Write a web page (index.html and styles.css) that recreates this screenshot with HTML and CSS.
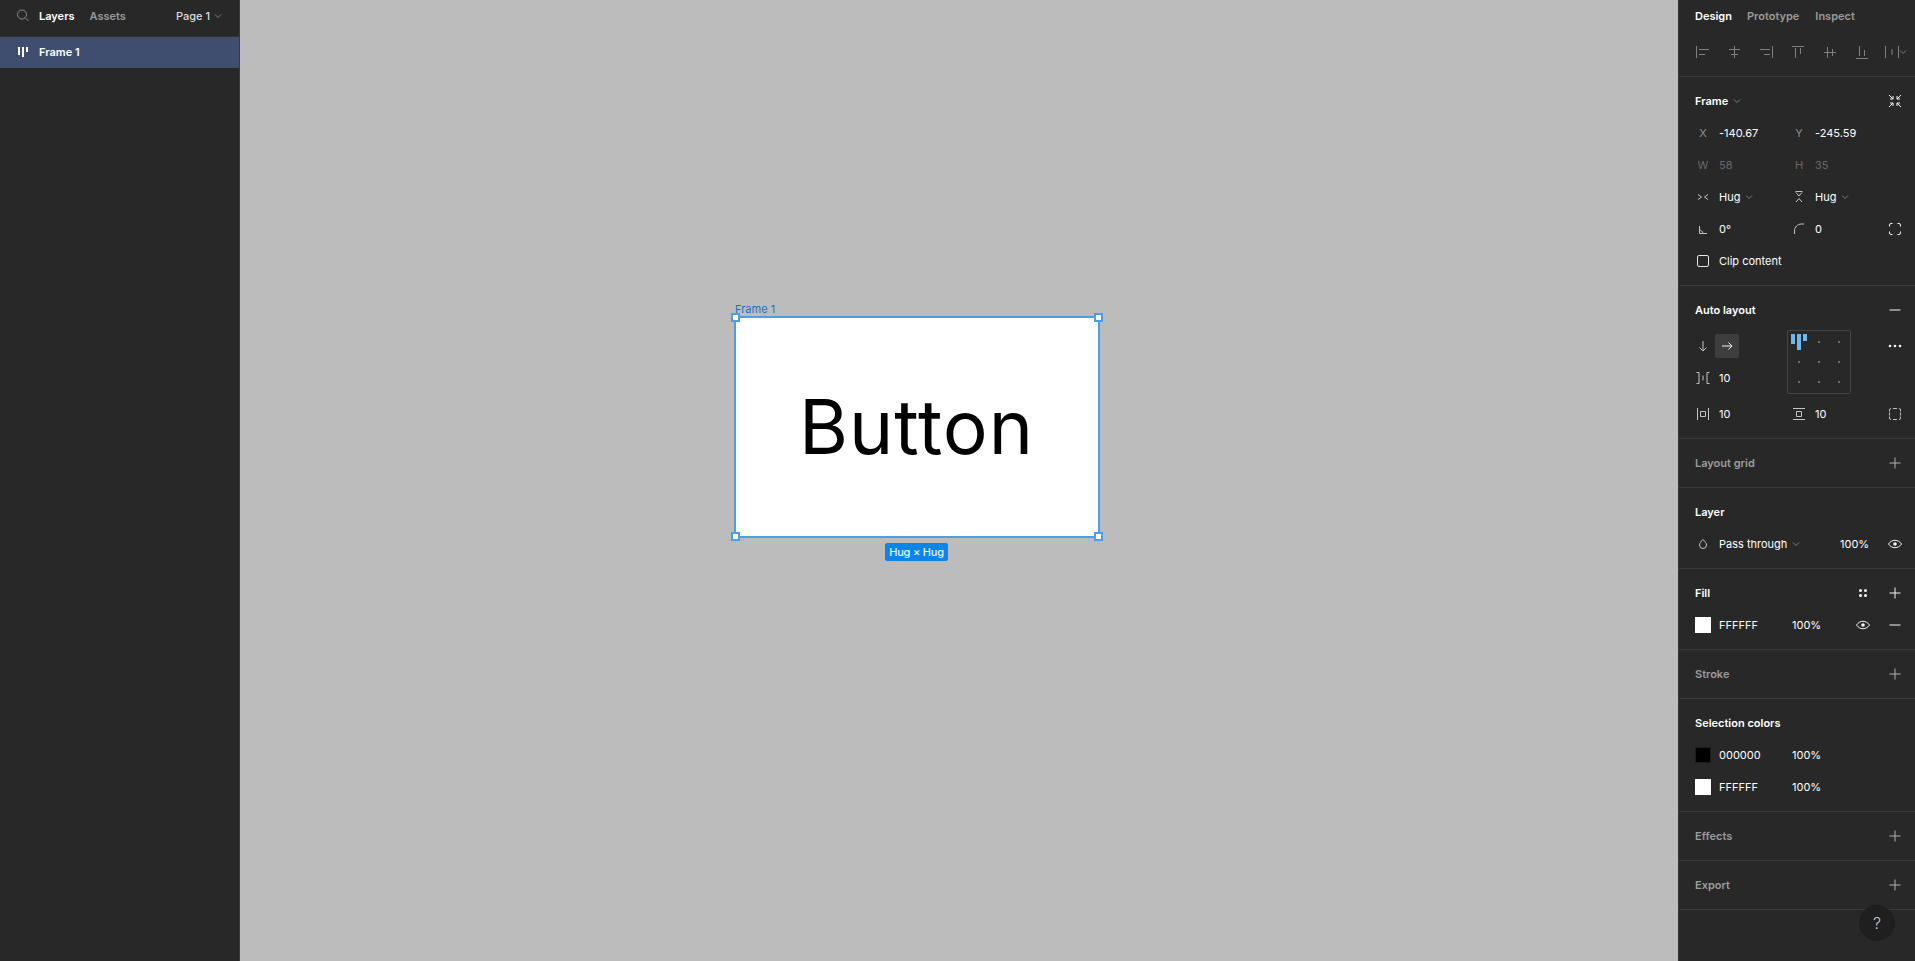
FILE: index.html
```html
<!DOCTYPE html>
<html lang="en">
<head>
<meta charset="utf-8">
<title>Frame 1</title>
<link rel="stylesheet" href="styles.css">
</head>
<body>
<svg class="defs" xmlns="http://www.w3.org/2000/svg">
  <symbol id="plus" viewBox="0 0 24 24"><path d="M12 6.500v11M6.500 12h11"/></symbol>
  <symbol id="minus" viewBox="0 0 24 24"><path d="M6.500 12h11"/></symbol>
  <symbol id="chev" viewBox="0 0 8 8"><path d="M1 2.500l3 3 3-3"/></symbol>
  <symbol id="eye" viewBox="0 0 24 24"><path d="M5.500 12c1.700-2.500 3.900-3.700 6.500-3.700s4.800 1.200 6.500 3.700c-1.700 2.500-3.900 3.700-6.500 3.700s-4.800-1.200-6.500-3.700z"/><circle class="solid" cx="12" cy="12" r="1.800"/></symbol>
</svg>

<div class="app">
  <aside class="left">
    <header class="left-head">
      <svg class="ic search" viewBox="0 0 24 24"><circle cx="11" cy="10.500" r="4.500"/><path d="M14.500 14l3 3"/></svg>
      <span class="tab on">Layers</span>
      <span class="tab">Assets</span>
      <span class="page">Page 1<svg class="chev" viewBox="0 0 8 8"><use href="#chev"/></svg></span>
    </header>
    <div class="layer-row">
      <svg class="ic layer-ic" viewBox="0 0 24 24"><path d="M7 7h2v8H7zM11 7h2v10h-2zM15 7h2v5h-2z"/></svg>
      <span>Frame 1</span>
    </div>
  </aside>

  <main class="canvas">
    <div class="frame-label">Frame 1</div>
    <div class="frame">
      <span class="frame-text">Button</span>
      <i class="handle tl"></i><i class="handle tr"></i><i class="handle bl"></i><i class="handle br"></i>
      <span class="size-badge">Hug × Hug</span>
    </div>
  </main>

  <aside class="right">
    <section class="sec sec-top">
      <nav class="right-tabs">
        <span class="tab on">Design</span>
        <span class="tab">Prototype</span>
        <span class="tab inspect">Inspect</span>
      </nav>
      <div class="align-row">
        <svg class="ic gray" viewBox="0 0 24 24"><path d="M6.500 6v12M9 9.500h10M9 14.500h6"/></svg>
        <svg class="ic gray" viewBox="0 0 24 24"><path d="M12.500 6v12M7 9.500h11M9 14.500h7"/></svg>
        <svg class="ic gray" viewBox="0 0 24 24"><path d="M18.500 6v12M6 9.500h10M10 14.500h6"/></svg>
        <svg class="ic gray" viewBox="0 0 24 24"><path d="M6 6.500h12M9.500 8v10M14.500 8v6"/></svg>
        <svg class="ic gray" viewBox="0 0 24 24"><path d="M6 12.500h12M9.500 7v11M14.500 9v7"/></svg>
        <svg class="ic gray" viewBox="0 0 24 24"><path d="M6 18.500h12M9.500 6v10M14.500 10v6"/></svg>
        <span class="distribute">
          <svg class="ic gray" viewBox="0 0 24 24"><path d="M5.500 6v12M18.500 6v12M12 9v6"/></svg>
          <svg class="chev" viewBox="0 0 8 8"><use href="#chev"/></svg>
        </span>
      </div>
    </section>

    <section class="sec">
      <div class="title-row">
        <span class="title">Frame<svg class="chev" viewBox="0 0 8 8"><use href="#chev"/></svg></span>
        <svg class="ic white" viewBox="0 0 24 24"><path d="M6 6l4 4M7 10h3V7M18 6l-4 4M17 10h-3V7M6 18l4-4M7 14h3v3M18 18l-4-4M17 14h-3v3"/></svg>
      </div>
      <div class="prop-grid">
        <div class="cell"><span class="lbl">X</span><span class="val">-140.67</span></div>
        <div class="cell"><span class="lbl">Y</span><span class="val">-245.59</span></div>
        <span></span>
        <div class="cell dis"><span class="lbl">W</span><span class="val">58</span></div>
        <div class="cell dis"><span class="lbl">H</span><span class="val">35</span></div>
        <span></span>
        <div class="cell">
          <svg class="ic light" viewBox="0 0 24 24"><path d="M7 9.500l3.500 2.500L7 14.500M17 9.500L13.500 12l3.500 2.500"/></svg>
          <span class="val">Hug</span><svg class="chev" viewBox="0 0 8 8"><use href="#chev"/></svg>
        </div>
        <div class="cell">
          <svg class="ic light" viewBox="0 0 24 24"><path d="M8.500 6.500h7M9 7.500l3 3.500 3-3.500M9 17l3-3.500 3 3.500"/></svg>
          <span class="val">Hug</span><svg class="chev" viewBox="0 0 8 8"><use href="#chev"/></svg>
        </div>
        <span></span>
        <div class="cell">
          <svg class="ic light" viewBox="0 0 24 24"><path d="M8.500 9v7.500H16M8.500 13c1.600 0 3 1.300 3.500 3.500"/></svg>
          <span class="val">0°</span>
        </div>
        <div class="cell">
          <svg class="ic light" viewBox="0 0 24 24"><path d="M7.500 17v-3c0-4 3-7 7-7H17"/></svg>
          <span class="val">0</span>
        </div>
        <svg class="ic white" viewBox="0 0 24 24"><path d="M6.500 9.500V8a1.500 1.500 0 0 1 1.500-1.500h1.500M14.500 6.500H16A1.500 1.500 0 0 1 17.500 8v1.500M17.500 14.500V16a1.500 1.500 0 0 1-1.500 1.500h-1.500M9.500 17.500H8A1.500 1.500 0 0 1 6.500 16v-1.500"/></svg>
      </div>
      <div class="clip-row">
        <i class="checkbox"></i><span class="val">Clip content</span>
      </div>
    </section>

    <section class="sec">
      <div class="title-row">
        <span class="title">Auto layout</span>
        <svg class="ic white"><use href="#minus"/></svg>
      </div>
      <div class="auto-grid">
        <div class="cell dir">
          <svg class="ic light" viewBox="0 0 24 24"><path d="M12 7v10M8.500 13.500L12 17l3.500-3.500"/></svg>
          <span class="dir-on"><svg class="ic white" viewBox="0 0 24 24"><path d="M7 12h10M13.500 8.500L17 12l-3.500 3.500"/></svg></span>
        </div>
        <div class="align-box">
          <i class="bars"><b class="b1"></b><b class="b2"></b><b class="b3"></b></i>
          <i class="dot first"></i><i class="dot"></i><i class="dot"></i><i class="dot"></i><i class="dot"></i><i class="dot"></i><i class="dot"></i><i class="dot"></i>
        </div>
        <svg class="ic white" viewBox="0 0 24 24"><circle class="solid" cx="7" cy="12" r="1.300"/><circle class="solid" cx="12" cy="12" r="1.300"/><circle class="solid" cx="17" cy="12" r="1.300"/></svg>
        <div class="cell gap-row">
          <svg class="ic light" viewBox="0 0 24 24"><path d="M5.500 6.500h2.500v11H5.500M18.500 6.500H16v11h2.500M12 9.500v5"/></svg>
          <span class="val">10</span>
        </div>
        <div class="cell pad-row">
          <svg class="ic light" viewBox="0 0 24 24"><path d="M6.500 6v12M17.500 6v12M9.500 9.500h5v5h-5z"/></svg>
          <span class="val">10</span>
        </div>
        <div class="cell pad-row">
          <svg class="ic light" viewBox="0 0 24 24"><path d="M6 6.500h12M6 17.500h12M9.500 9.500h5v5h-5z"/></svg>
          <span class="val">10</span>
        </div>
        <div class="cell pad-row">
          <svg class="ic light" viewBox="0 0 24 24"><path d="M6.500 9.500V8A1.500 1.500 0 0 1 8 6.500M6.500 10.500v3M10 6.500h4M17.500 10.500v3M10 17.500h4M16 6.500A1.500 1.500 0 0 1 17.500 8v1.500M17.500 14.500V16a1.500 1.500 0 0 1-1.500 1.500M8 17.500A1.500 1.500 0 0 1 6.500 16v-1.500"/></svg>
        </div>
      </div>
    </section>

    <section class="sec">
      <div class="title-row dim">
        <span class="title">Layout grid</span>
        <svg class="ic"><use href="#plus"/></svg>
      </div>
    </section>

    <section class="sec">
      <div class="title-row"><span class="title">Layer</span></div>
      <div class="row layer-props">
        <div class="cell">
          <svg class="ic light" viewBox="0 0 24 24"><path d="M12 7.500c2.200 2.200 3.500 3.900 3.500 5.500a3.500 3.500 0 0 1-7 0c0-1.600 1.300-3.300 3.500-5.500z"/></svg>
          <span class="val">Pass through</span><svg class="chev" viewBox="0 0 8 8"><use href="#chev"/></svg>
        </div>
        <span class="val pct-end">100%</span>
        <svg class="ic white"><use href="#eye"/></svg>
      </div>
    </section>

    <section class="sec">
      <div class="title-row">
        <span class="title">Fill</span>
        <div class="title-acts">
          <svg class="ic white" viewBox="0 0 24 24"><circle class="solid" cx="9.500" cy="9.500" r="1.500"/><circle class="solid" cx="14.500" cy="9.500" r="1.500"/><circle class="solid" cx="9.500" cy="14.500" r="1.500"/><circle class="solid" cx="14.500" cy="14.500" r="1.500"/></svg>
          <svg class="ic white"><use href="#plus"/></svg>
        </div>
      </div>
      <div class="row color-row">
        <i class="swatch s-white"></i><span class="val hex">FFFFFF</span><span class="val pct">100%</span>
        <div class="title-acts push">
          <svg class="ic white"><use href="#eye"/></svg>
          <svg class="ic white"><use href="#minus"/></svg>
        </div>
      </div>
    </section>

    <section class="sec">
      <div class="title-row dim">
        <span class="title">Stroke</span>
        <svg class="ic"><use href="#plus"/></svg>
      </div>
    </section>

    <section class="sec">
      <div class="title-row"><span class="title">Selection colors</span></div>
      <div class="row color-row">
        <i class="swatch s-black"></i><span class="val hex">000000</span><span class="val pct">100%</span>
      </div>
      <div class="row color-row">
        <i class="swatch s-white"></i><span class="val hex">FFFFFF</span><span class="val pct">100%</span>
      </div>
    </section>

    <section class="sec">
      <div class="title-row dim">
        <span class="title">Effects</span>
        <svg class="ic"><use href="#plus"/></svg>
      </div>
    </section>

    <section class="sec">
      <div class="title-row dim">
        <span class="title">Export</span>
        <svg class="ic"><use href="#plus"/></svg>
      </div>
    </section>

    <button class="help">?</button>
  </aside>
</div>
</body>
</html>
```

FILE: styles.css
```css
* { box-sizing: border-box; }
html, body { margin: 0; height: 100%; overflow: hidden; }
body {
  font-family: Inter, "Liberation Sans", sans-serif;
  font-size: 11px;
  color: #fff;
  background: #bcbcbc;
}
.defs { display: none; }
.app { display: flex; height: 961px; }

.ic { width: 24px; height: 24px; flex: none; fill: none; stroke: currentColor; stroke-width: 1; }
.solid { fill: currentColor; stroke: none; }
.white { color: #f5f5f5; }
.light { color: #c4c4c4; }
.gray { color: #808080; }
.chev { width: 8px; height: 8px; flex: none; fill: none; stroke: #7d7d7d; stroke-width: 1; }

/* Left panel */
.left { width: 240px; flex: none; background: #282828; border-right: 1px solid #3a3a3a; }
.left-head { display: flex; align-items: center; height: 37px; padding-left: 11px; padding-bottom: 5px; border-bottom: 1px solid #333; }
.search { color: #8a8a8a; }
.tab { font-weight: 600; color: #9a9a9a; }
.tab.on { color: #fff; }
.left-head .tab.on { margin-left: 4px; }
.left-head .tab:not(.on) { margin-left: 15px; }
.page { margin-left: auto; margin-right: 17px; display: flex; align-items: center; gap: 4px; font-weight: 500; color: #dcdcdc; }
.layer-row { display: flex; align-items: center; height: 31px; padding-left: 11px; padding-bottom: 1px; gap: 4px; background: #3f4e6f; color: #fff; font-weight: 600; }
.layer-ic { fill: #fff; stroke: none; }

/* Canvas */
.canvas { flex: 1; position: relative; background: #bcbcbc; }
.frame-label { position: absolute; left: 495px; top: 302px; color: #1d6fc2; font-size: 11px; line-height: 14px; }
.frame { position: absolute; left: 494px; top: 316px; width: 366px; height: 222px; padding-bottom: 1px; background: #fff; border: 2px solid #4a9fe8; display: flex; align-items: center; justify-content: center; }
.frame-text { color: #000; font-size: 75px; line-height: 1; letter-spacing: 1px; margin-left: -1px; }
.handle { position: absolute; width: 9px; height: 9px; background: #fff; border: 2px solid #4a9fe8; }
.tl { left: -5px; top: -5px; }
.tr { right: -5px; top: -5px; }
.bl { left: -5px; bottom: -5px; }
.br { right: -5px; bottom: -5px; }
.size-badge { position: absolute; left: 149px; top: 225px; width: 63px; height: 18px; background: #0d85e8; color: #e8f3ff; border-radius: 2px; font-weight: 500; letter-spacing: -0.2px; line-height: 18px; text-align: center; }

/* Right panel */
.right { width: 237px; flex: none; position: relative; background: #282828; border-left: 1px solid #333; }
.sec { padding: 8px 0; border-bottom: 1px solid #3a3a3a; }
.sec-top { padding: 0; height: 77px; }
.right-tabs { display: flex; align-items: center; gap: 15px; height: 32px; padding-left: 16px; }
.inspect { margin-left: 1px; }
.align-row { display: flex; height: 40px; padding-left: 11px; align-items: center; gap: 8px; }
.distribute { display: flex; align-items: center; margin-left: -2px; }
.distribute .chev { margin-left: -5px; }

.title-row { display: flex; align-items: center; justify-content: space-between; height: 32px; padding: 0 8px 0 16px; }
.title { display: flex; align-items: center; gap: 5px; font-weight: 600; color: #fff; }
.dim { color: #b0b0b0; }
.dim .title { color: #9c9c9c; }
.title-acts { display: flex; gap: 8px; }

.prop-grid { display: grid; grid-template-columns: 96px 96px 24px; grid-auto-rows: 32px; align-items: center; padding-left: 12px; }
.cell { display: flex; align-items: center; gap: 4px; min-width: 0; }
.cell .chev { margin-left: 1px; }
.lbl { width: 24px; flex: none; text-align: center; color: #8c8c8c; }
.val { color: #fff; white-space: nowrap; }
.dis .lbl, .dis .val { color: #696969; }
.clip-row { display: flex; align-items: center; height: 32px; padding-left: 18px; gap: 10px; }
.checkbox { width: 12px; height: 12px; border: 1px solid #e6e6e6; border-radius: 2px; }

.auto-grid { display: grid; grid-template-columns: 96px 96px 24px; grid-template-rows: 32px 32px 36px; align-items: center; padding-left: 12px; margin-top: 4px; }
.dir { gap: 0; }
.dir-on { width: 24px; height: 24px; background: #3e3e3e; border-radius: 2px; display: block; }
.dir-on .ic { display: block; }
.align-box { grid-column: 2; grid-row: 1 / span 2; width: 64px; height: 64px; border: 1px solid #444; border-radius: 2px; display: grid; grid-template-columns: repeat(3, 20px); grid-template-rows: repeat(3, 20px); place-items: center; justify-content: center; align-content: center; position: relative; }
.dot { width: 2px; height: 2px; background: #6e6e6e; }
.dot.first { grid-column: 2; }
.bars { display: flex; gap: 2px; align-items: flex-start; position: absolute; left: 3px; top: 3px; }
.bars b { display: block; width: 4px; background: #6cb8f2; }
.b1 { height: 10px; }
.b2 { height: 16px; }
.b3 { height: 7px; }
.gap-row { grid-column: 1; grid-row: 2; }
.pad-row { align-self: end; height: 32px; grid-row: 3; }

.row { display: flex; align-items: center; height: 32px; }
.layer-props { padding-left: 12px; }
.layer-props .cell { width: 149px; }
.pct-end { width: 43px; }
.color-row { padding: 0 8px 0 16px; }
.swatch { width: 16px; height: 16px; flex: none; }
.s-white { background: #fff; }
.s-black { background: #000; border: 1px solid #1c1c1c; }
.hex { margin-left: 8px; width: 73px; }
.pct { width: 40px; }
.push { margin-left: auto; }

.help { position: absolute; left: 180px; top: 905px; width: 36px; height: 36px; border: 0; border-radius: 50%; background: #1f1f1f; color: #c8c8c8; font: 300 16px Inter, sans-serif; padding: 0; }
```
